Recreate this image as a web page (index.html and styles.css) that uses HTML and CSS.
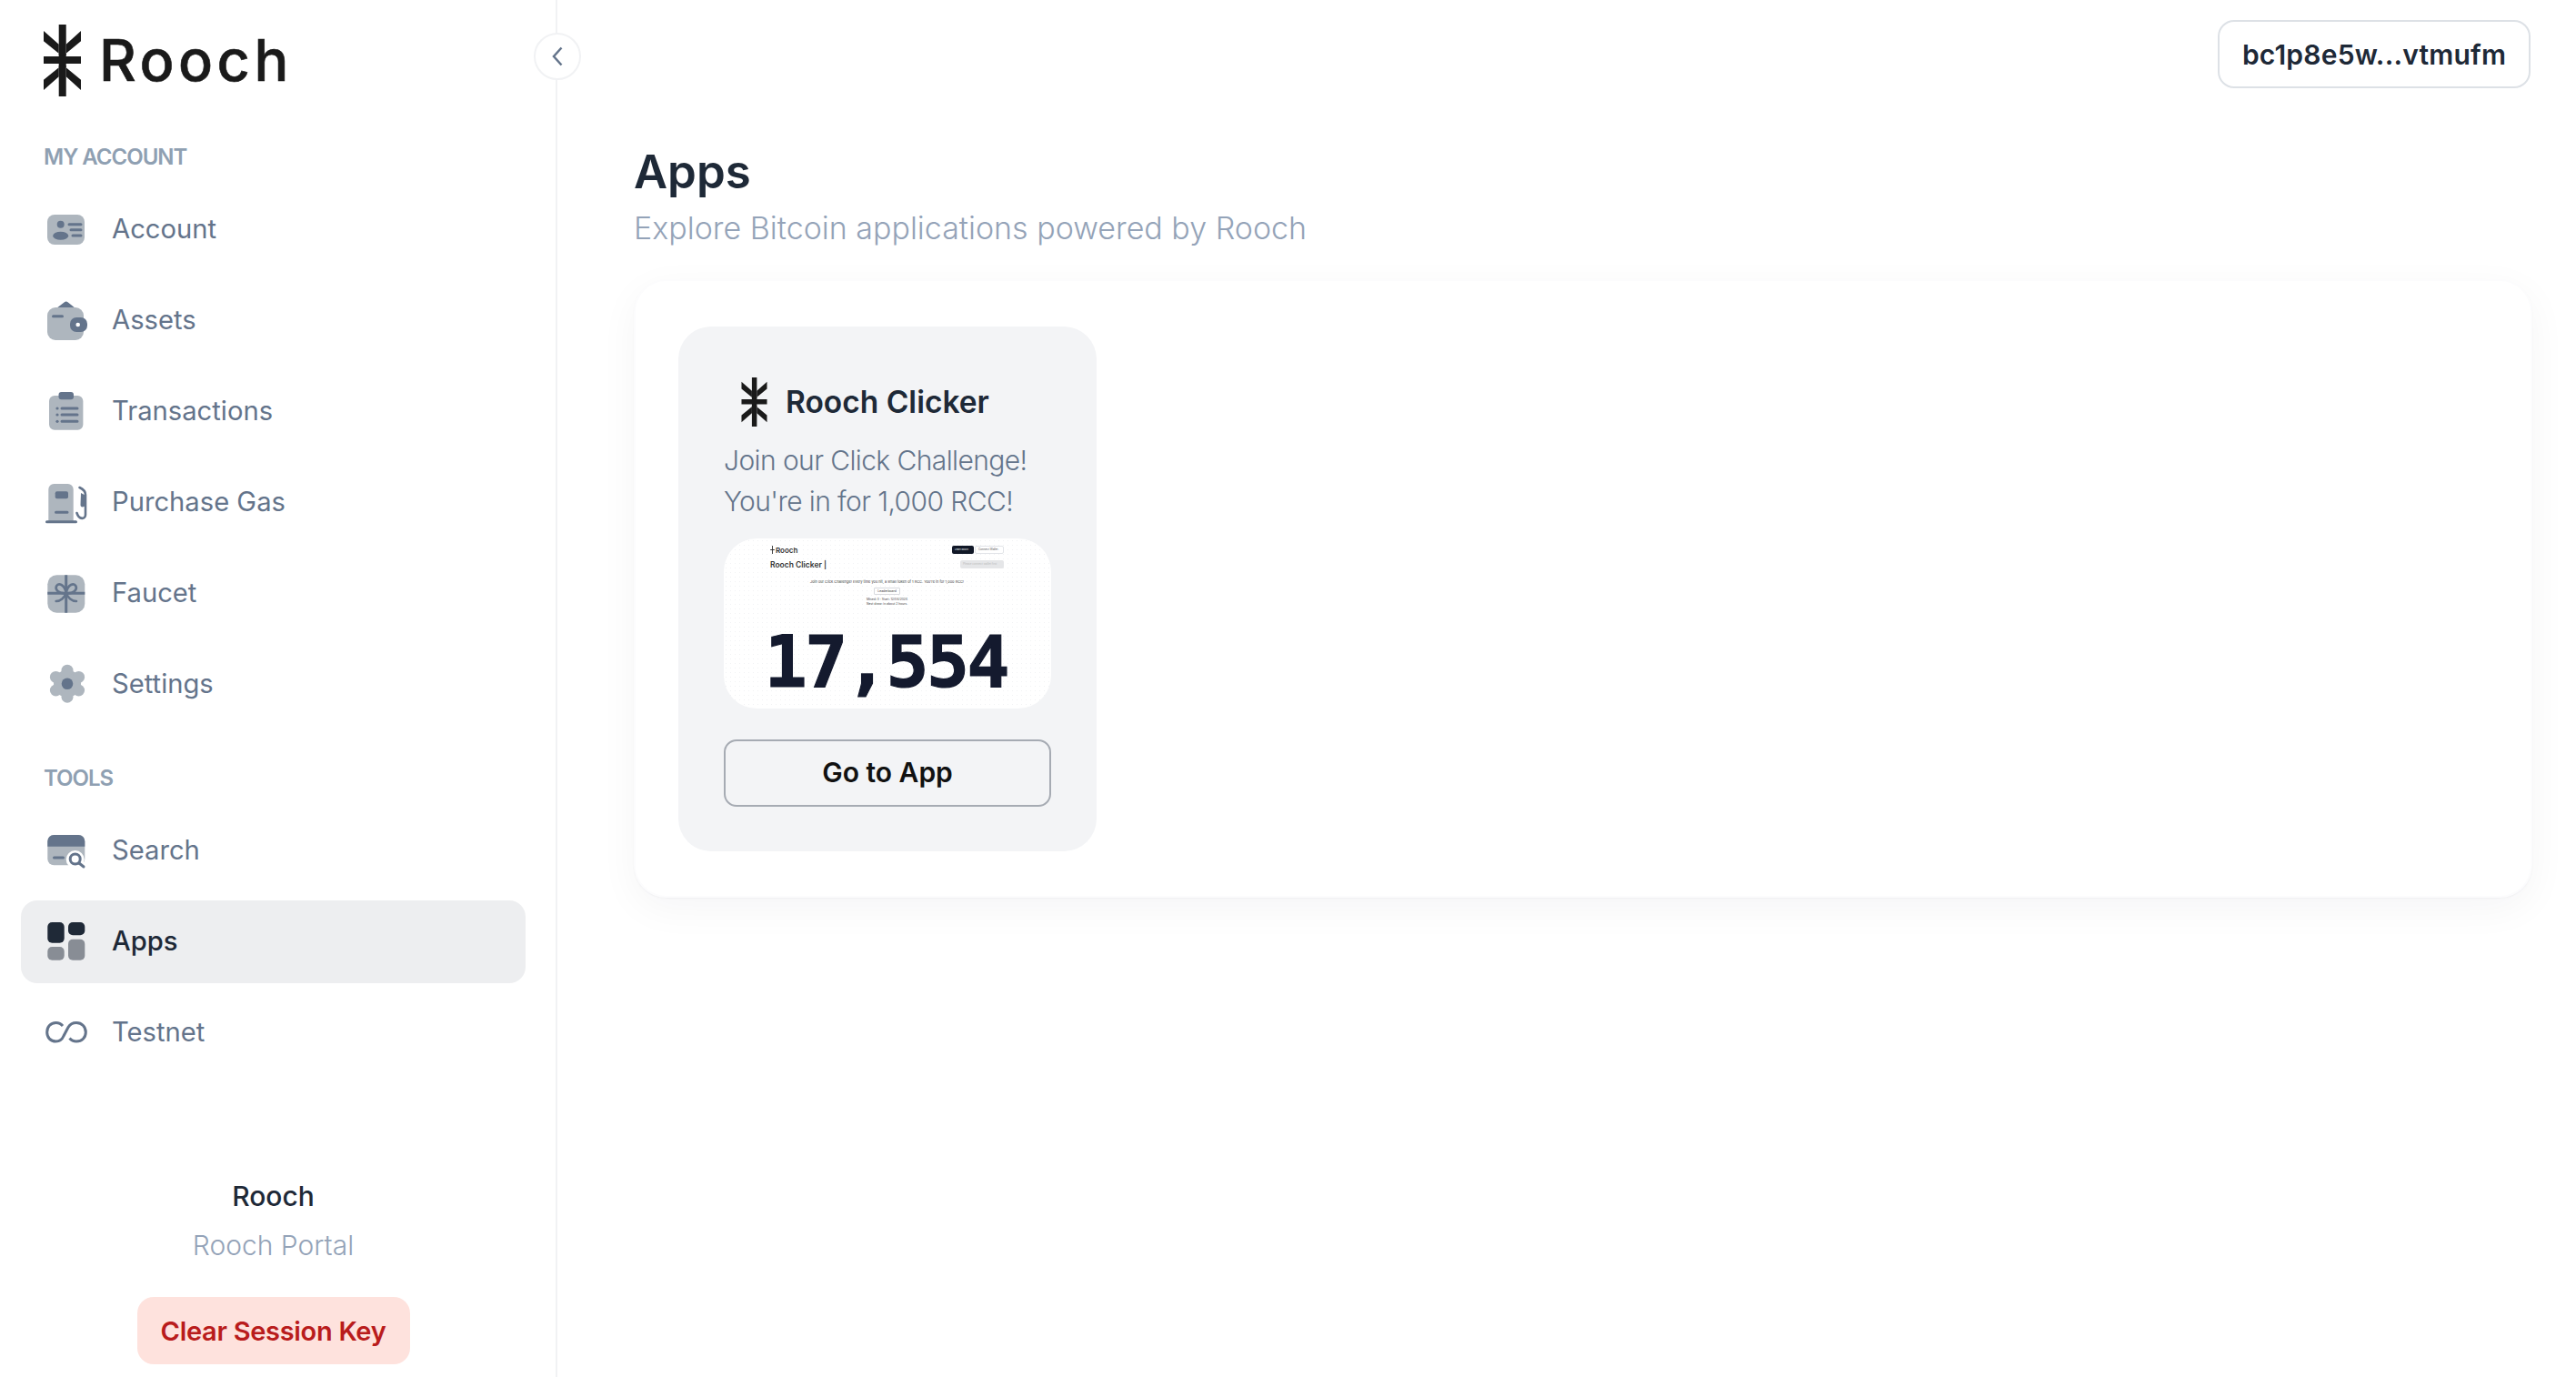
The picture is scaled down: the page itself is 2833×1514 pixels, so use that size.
FILE: index.html
```html
<!DOCTYPE html>
<html lang="en">
<head>
<meta charset="utf-8">
<title>Rooch Portal - Apps</title>
<link rel="stylesheet" href="styles.css">
</head>
<body>
<div class="app">
  <aside class="sidebar">
    <div class="brand">
      <svg class="brand-mark" viewBox="0 0 41 79"><path d="M16.7 0h8v35H41v8H24.7v36h-8V43H0v-8h16.7z"/><path d="M0 7l16.7 14.7V33.500L20.700 35 0 18.300zM41 7L24.700 21.700V33.500L20.700 35 41 18.300zM0 72L16.700 57.300V45.500L20.700 44 0 60.700zM41 72L24.700 57.300V45.500L20.700 44 41 60.700z"/></svg>
      <span class="brand-name">Rooch</span>
    </div>
    <button class="collapse" aria-label="Collapse"><svg viewBox="0 0 16 24"><path d="M12.500 2.500 4 12l8.500 9.500"/></svg></button>

    <div class="section-label first">My Account</div>
    <nav class="nav">
      <a class="nav-item"><svg class="icon" viewBox="0 0 48 48"><rect class="lt" x="3" y="8" width="41" height="33" rx="8"/><circle class="dk" cx="17.700" cy="18.700" r="4"/><ellipse class="dk" cx="17.700" cy="31.300" rx="8.500" ry="4.500"/><path class="ln" d="M27 18.700h13M29 24.700h11M31 31h9"/></svg>Account</a>
      <a class="nav-item"><svg class="icon" viewBox="0 0 48 48"><path class="dk" d="M13 11 21.500 4.500a3.500 3.500 0 0 1 4.400 0L34 11z"/><rect class="lt" x="3" y="10" width="40" height="36" rx="9"/><rect class="dk wh-ring" x="28" y="21" width="19" height="16" rx="7"/><circle class="wh" cx="36.700" cy="29" r="2.300"/><path class="ln" d="M9.500 19.700h10"/></svg>Assets</a>
      <a class="nav-item"><svg class="icon" viewBox="0 0 48 48"><rect class="lt" x="5" y="7" width="37.400" height="37.700" rx="6"/><rect class="dk" x="15.500" y="3" width="16.500" height="8.300" rx="3"/><path class="ln" d="M19 21h17M19 28h17M19 35.300h17"/><circle class="dk" cx="14" cy="21" r="1.600"/><circle class="dk" cx="14" cy="28" r="1.600"/><circle class="dk" cx="14" cy="35.300" r="1.600"/></svg>Transactions</a>
      <a class="nav-item"><svg class="icon" viewBox="0 0 48 48"><path class="lt" d="M4.300 45V10a6 6 0 0 1 6-6h15.400a6 6 0 0 1 6 6v35z"/><rect class="dk" x="11.700" y="12.300" width="14.300" height="8" rx="2"/><path class="ln" d="M12.500 35.300h12.500M2.500 45.700h32"/><path class="ln thin" d="M38.500 8C43 10 45 12 45 16V38C45 43 38 44 35.500 36"/><path class="dk" d="M40 14 45.500 17V28C42 30 39.500 30 39.500 27z"/></svg>Purchase Gas</a>
      <a class="nav-item"><svg class="icon" viewBox="0 0 48 48"><rect class="lt" x="3.300" y="4.300" width="41" height="41.400" rx="10"/><path class="ln square" d="M23.700 4.300V45.700M3.300 24.300H44.300"/><path class="ln thin" d="M23.700 24.300C15 25 11.500 20 13 16.500C15 13 22 13.500 23.700 24.300C25.500 13.500 32.500 13 34.500 16.500C36 20 32.500 25 23.700 24.300ZM23.700 24.300C22 29 17.500 33 12.700 33M23.700 24.300C25.500 29 30 33 35 33"/></svg>Faucet</a>
      <a class="nav-item"><svg class="icon" viewBox="0 0 48 48"><g class="lt"><circle cx="25" cy="23.700" r="15"/><circle cx="25" cy="9.200" r="6.500"/><circle cx="25" cy="38.200" r="6.500"/><circle cx="12.400" cy="16.400" r="6.500"/><circle cx="37.600" cy="16.400" r="6.500"/><circle cx="12.400" cy="31" r="6.500"/><circle cx="37.600" cy="31" r="6.500"/></g><circle class="dk" cx="25" cy="23.700" r="6.300"/></svg>Settings</a>
    </nav>

    <div class="section-label">Tools</div>
    <nav class="nav">
      <a class="nav-item"><svg class="icon" viewBox="0 0 48 48"><rect class="lt" x="3.300" y="7" width="41" height="33.300" rx="7"/><path class="dk" d="M3.300 19.700V14a7 7 0 0 1 7-7h27a7 7 0 0 1 7 7v5.700z"/><path class="ln" d="M10.500 32h10"/><circle class="wh" cx="33.700" cy="34" r="10"/><circle class="ring" cx="33.700" cy="33.500" r="5.500"/><path class="ln" d="M38 38l5 4"/></svg>Search</a>
      <a class="nav-item active"><svg class="icon" viewBox="0 0 48 48"><rect class="ink" x="3.300" y="3" width="18.400" height="22.700" rx="5"/><rect class="ink" x="26" y="3" width="18.300" height="14.300" rx="5"/><rect class="ash" x="3.300" y="30" width="18.400" height="14.700" rx="5"/><rect class="ash" x="26" y="21.700" width="18.300" height="23" rx="5"/></svg>Apps</a>
      <a class="nav-item"><svg class="icon" viewBox="0 0 48 48"><path class="ring" d="M20 17C18 14.500 15.500 13.500 12.500 13.500C6.500 13.500 2.700 18.300 2.700 24C2.700 29.600 6.500 34 12.500 34C17 34 19.500 31.500 21 28L26 18.500C28 15 30.500 13.500 35 13.500C41 13.500 45.300 18 45.300 24C45.300 30 41 34 35 34C32 34 29.500 33 27.500 30.500"/></svg>Testnet</a>
    </nav>

    <div class="sidebar-foot">
      <div class="foot-title">Rooch</div>
      <div class="foot-sub">Rooch Portal</div>
      <button class="clear-key">Clear Session Key</button>
    </div>
  </aside>

  <main class="main">
    <div class="topbar"><button class="wallet">bc1p8e5w...vtmufm</button></div>
    <h1 class="page-title">Apps</h1>
    <p class="page-sub">Explore Bitcoin applications powered by Rooch</p>

    <section class="panel">
      <article class="app-card">
        <header class="app-head">
          <svg class="app-mark" viewBox="0 0 41 79"><path d="M16.700 0h8v35H41v8H24.700v36h-8V43H0v-8h16.700z"/><path d="M0 7l16.700 14.700V33.500L20.700 35 0 18.300zM41 7L24.700 21.700V33.500L20.700 35 41 18.300zM0 72L16.700 57.300V45.500L20.700 44 0 60.700zM41 72L24.700 57.300V45.500L20.700 44 41 60.700z"/></svg>
          <h2 class="app-name">Rooch Clicker</h2>
        </header>
        <p class="app-desc">Join our Click Challenge!<br>You're in for 1,000 RCC!</p>
        <div class="shot">
          <div class="shot-row">
            <span class="shot-brand"><svg class="shot-mark" viewBox="0 0 41 79"><path d="M16.700 0h8v35H41v8H24.700v36h-8V43H0v-8h16.700z"/></svg>Rooch</span>
            <span class="shot-btns"><span class="shot-dark">Learn Rooch</span><span class="shot-light">Connect Wallet</span></span>
          </div>
          <div class="shot-row second">
            <span class="shot-title">Rooch Clicker |</span>
            <span class="shot-grey">Please connect wallet first</span>
          </div>
          <p class="shot-text">Join our Click Challenge! Every time you hit, a small token of 1 RCC. You're in for 1,000 RCC!</p>
          <span class="shot-board">Leaderboard</span>
          <p class="shot-meta">Mined: 0 · Start: 12/04/2024<br>Next draw: in about 2 hours</p>
          <div class="shot-count">17,554</div>
        </div>
        <button class="go">Go to App</button>
      </article>
    </section>
  </main>
</div>
</body>
</html>
```

FILE: styles.css
```css
* { box-sizing: border-box; }
html, body { margin: 0; height: 100%; }
body { font-family: "Inter", "Liberation Sans", sans-serif; background: #fff; color: #1e2937; overflow: hidden; }
button { font-family: inherit; cursor: pointer; }

.app { display: flex; height: 1514px; }

.sidebar { position: relative; flex: 0 0 613px; display: flex; flex-direction: column; border-right: 2px solid #f1f2f4; padding: 27px 33px 14px 23px; }
.brand { display: flex; align-items: center; gap: 20px; height: 79px; padding-left: 25px; }
.brand-mark { width: 41px; height: 79px; fill: #1a1a1a; flex: none; }
.brand-name { font-size: 63px; font-weight: 500; color: #1a1a1a; letter-spacing: 4.500px; line-height: 1; -webkit-text-stroke: .6px #1a1a1a; }

.collapse { position: absolute; top: 36px; right: -28px; width: 52px; height: 52px; border-radius: 50%; border: 2px solid #f1f2f4; background: #fff; display: flex; align-items: center; justify-content: center; padding: 0; }
.collapse svg { width: 16px; height: 24px; fill: none; stroke: #64748b; stroke-width: 2.500; }

.section-label { font-size: 24px; font-weight: 600; line-height: 30px; text-transform: uppercase; color: #8fa0b2; letter-spacing: -1px; margin: 43px 0 19px 25px; }
.section-label.first { margin-top: 52px; }

.nav { display: flex; flex-direction: column; gap: 9px; }
.nav-item { display: flex; align-items: center; gap: 26px; height: 91px; padding: 0 0 2px 26px; border-radius: 18px; font-size: 29.200px; color: #64748b; }
.nav-item.active { background: #edeef0; color: #1e2937; font-weight: 500; }

.icon { width: 48px; height: 48px; flex: none; }
.lt { fill: #aeb6be; }
.dk { fill: #64748b; }
.wh { fill: #fff; }
.ink { fill: #1f2937; }
.ash { fill: #888d95; }
.ln { fill: none; stroke: #64748b; stroke-width: 3; stroke-linecap: round; }
.ln.thin { stroke-width: 2.600; }
.ln.square { stroke-linecap: butt; }
.ring { fill: none; stroke: #64748b; stroke-width: 3; }

.sidebar-foot { margin-top: auto; display: flex; flex-direction: column; align-items: center; }
.foot-title { font-size: 30px; font-weight: 500; line-height: 40px; color: #1e2937; }
.foot-sub { font-size: 30px; font-weight: 300; line-height: 40px; margin-top: 14px; color: #94a3b8; }
.clear-key { margin-top: 37px; height: 74px; width: 300px; border: 0; border-radius: 18px; background: #fee2dd; color: #b91c1c; font-size: 29px; font-weight: 600; letter-spacing: -0.3px; padding: 0; }

.main { flex: 1; padding: 22px 48px 0 84px; min-width: 0; }
.topbar { display: flex; justify-content: flex-end; }
.wallet { height: 75px; width: 344px; margin-right: 2px; border: 2px solid #dde1e6; border-radius: 18px; background: #fff; color: #1e2937; font-size: 30px; font-weight: 600; letter-spacing: .2px; padding: 0; }

.page-title { margin: 62px 0 0; font-size: 51px; font-weight: 600; line-height: 60px; color: #1e2937; }
.page-sub { margin: 7px 0 0; font-size: 34px; font-weight: 300; line-height: 50px; color: #94a3b8; }

.panel { margin-top: 31px; height: 680px; border: 2px solid #fcfcfd; border-radius: 36px; padding: 50px 47px; background: #fff; box-shadow: 0 12px 44px rgba(15, 23, 42, .045), 0 1px 2px rgba(15, 23, 42, .04); }

.app-card { width: 460px; height: 577px; border-radius: 36px; background: #f3f4f6; padding: 56px 50px 0; display: flex; flex-direction: column; }
.app-head { display: flex; align-items: center; gap: 20px; padding-left: 19px; height: 54px; }
.app-mark { width: 29px; height: 54px; fill: #1a1a1a; flex: none; }
.app-name { margin: 0; font-size: 33.500px; font-weight: 600; color: #1e2937; }
.app-desc { margin: 15px 0 18px; font-size: 30px; font-weight: 300; letter-spacing: -0.6px; line-height: 45px; color: #64748b; white-space: nowrap; }

.shot { height: 187px; border-radius: 36px; padding: 8px 52px 0 51px; overflow: hidden; background-color: #fff; background-image: radial-gradient(#f1f2f4 .6px, transparent .8px); background-size: 5px 5px; display: flex; flex-direction: column; align-items: center; }
.shot-row { align-self: stretch; display: flex; justify-content: space-between; align-items: center; height: 9px; }
.shot-row.second { margin-top: 7px; }
.shot-brand { display: flex; align-items: center; gap: 1px; font-size: 8px; font-weight: 600; color: #333; }
.shot-mark { width: 5px; height: 9px; fill: #333; }
.shot-btns { display: flex; gap: 1px; }
.shot-dark { background: #111827; color: #fff; font-size: 2.500px; line-height: 9px; padding: 0 3px; border-radius: 2px; width: 24px; white-space: nowrap; overflow: hidden; }
.shot-light { border: 1px solid #e2e4e8; color: #555; font-size: 3px; line-height: 7px; padding: 0 3px; border-radius: 2px; width: 32px; white-space: nowrap; overflow: hidden; }
.shot-title { font-size: 8.500px; font-weight: 600; color: #333; white-space: nowrap; }
.shot-grey { background: #e5e6e8; color: #bbb; font-size: 3px; line-height: 9px; padding: 0 3px; border-radius: 2px; width: 48px; white-space: nowrap; overflow: hidden; }
.shot-text { margin: 12px 0 0; font-size: 3.900px; line-height: 5px; color: #444; white-space: nowrap; }
.shot-board { margin-top: 4px; border: 1px solid #d8dade; border-radius: 1px; font-size: 3.400px; line-height: 6px; padding: 0 3px; color: #333; }
.shot-meta { margin: 3px 0 0; font-size: 3.400px; line-height: 5px; color: #444; white-space: nowrap; }
.shot-count { margin: 21px 2px 0 0; font-family: "DejaVu Sans Mono", "Liberation Mono", monospace; font-weight: 700; font-size: 78px; letter-spacing: -2.400px; line-height: 80px; color: #141a2e; -webkit-text-stroke: 1.200px #141a2e; white-space: nowrap; }

.go { margin-top: 34px; height: 74px; width: 360px; flex: none; border: 2px solid #a6abb3; border-radius: 14px; background: transparent; color: #111; font-size: 30px; font-weight: 600; padding: 0 0 2px; }
```
